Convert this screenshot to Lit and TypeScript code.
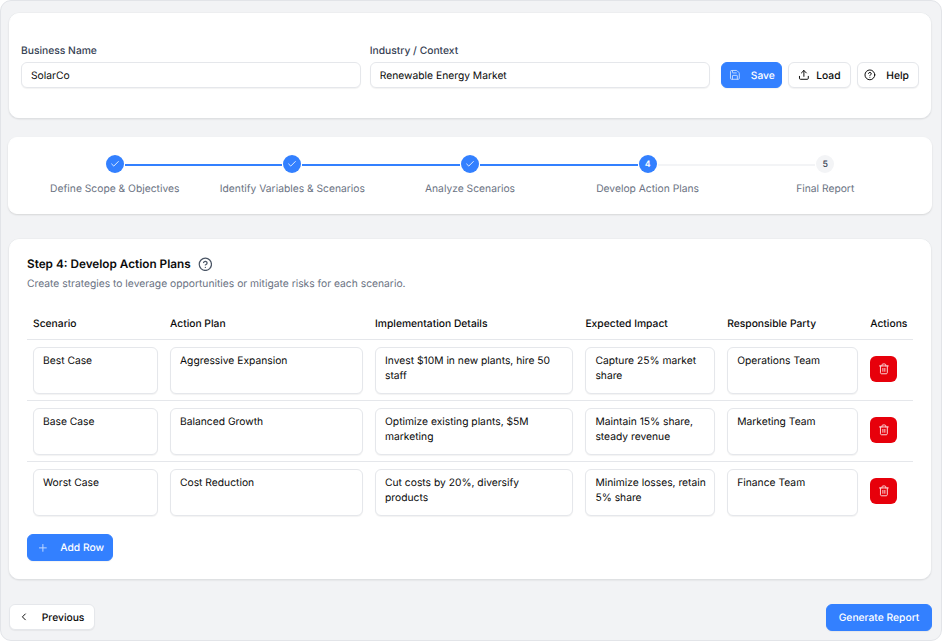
import { LitElement, html, css, svg } from "lit";
import { customElement } from "lit/decorators.js";

const icon = (body: unknown, cls = "") => html`<svg class="ic ${cls}" viewBox="0 0 24 24" fill="none" stroke="currentColor" stroke-width="2" stroke-linecap="round" stroke-linejoin="round">${body}</svg>`;
const icons = {
  save: svg`<path d="M15.2 3a2 2 0 0 1 1.4.6l3.8 3.8a2 2 0 0 1 .6 1.4V19a2 2 0 0 1-2 2H5a2 2 0 0 1-2-2V5a2 2 0 0 1 2-2z"/><path d="M17 21v-7a1 1 0 0 0-1-1H8a1 1 0 0 0-1 1v7"/><path d="M7 3v4a1 1 0 0 0 1 1h7"/>`,
  upload: svg`<path d="M21 15v4a2 2 0 0 1-2 2H5a2 2 0 0 1-2-2v-4"/><polyline points="17 8 12 3 7 8"/><line x1="12" x2="12" y1="3" y2="15"/>`,
  help: svg`<circle cx="12" cy="12" r="10"/><path d="M9.09 9a3 3 0 0 1 5.83 1c0 2-3 3-3 3"/><path d="M12 17h.01"/>`,
  trash: svg`<path d="M3 6h18"/><path d="M19 6v14c0 1-1 2-2 2H7c-1 0-2-1-2-2V6"/><path d="M8 6V4c0-1 1-2 2-2h4c1 0 2 1 2 2v2"/><line x1="10" x2="10" y1="11" y2="17"/><line x1="14" x2="14" y1="11" y2="17"/>`,
  plus: svg`<path d="M5 12h14"/><path d="M12 5v14"/>`,
  left: svg`<path d="m15 18-6-6 6-6"/>`,
  check: svg`<path d="M20 6 9 17l-5-5"/>`,
};

const steps = ["Define Scope & Objectives", "Identify Variables & Scenarios", "Analyze Scenarios", "Develop Action Plans", "Final Report"];
const cols = ["Scenario", "Action Plan", "Implementation Details", "Expected Impact", "Responsible Party", "Actions"];
const rows = [
  ["Best Case", "Aggressive Expansion", "Invest $10M in new plants, hire 50 staff", "Capture 25% market share", "Operations Team"],
  ["Base Case", "Balanced Growth", "Optimize existing plants, $5M marketing", "Maintain 15% share, steady revenue", "Marketing Team"],
  ["Worst Case", "Cost Reduction", "Cut costs by 20%, diversify products", "Minimize losses, retain 5% share", "Finance Team"],
];
const CURRENT = 3;

@customElement("app-root")
export class AppRoot extends LitElement {
  static styles = css`
    :host { display: block; font-family: Inter, "Liberation Sans", sans-serif; font-size: 10.29px; color: #0a0a0a; background: #fff; text-rendering: geometricPrecision; }
    * { box-sizing: border-box; }
    .frame { width: 942px; height: 641px; background: #f2f3f5; border: 1px solid #e2e4e8; border-radius: 11px; padding: 12px 10px 0 8px; display: flex; flex-direction: column; overflow: hidden; }
    .card { background: #fff; border-radius: 10px; border: 1px solid #fff; box-shadow: 0 0 0 .5px #e9ebee, 0 1px 2px rgba(0,0,0,.16); }
    .top { height: 105px; padding: 0 11px 29px; display: flex; align-items: flex-end; gap: 9px; flex: none; }
    .field { flex: 1; display: flex; flex-direction: column; gap: 4px; min-width: 0; }
    .top .field + .field { margin-right: 2px; }
    label { font-weight: 500; color: #364153; line-height: 14px; }
    input, textarea { font: inherit; color: #0a0a0a; border: 1px solid #e5e7eb; border-radius: 6px; background: #fff; box-shadow: 0 1px 1px rgba(0,0,0,.05); outline: none; text-rendering: geometricPrecision; }
    input { height: 26.46px; padding: 2px 9px 0; width: 100%; }
    .btns { display: flex; gap: 6px; }
    button { font: inherit; font-weight: 500; border-radius: 6px; height: 26.46px; display: inline-flex; align-items: center; border: 1px solid #e5e7eb; background: #fff; color: #0a0a0a; padding: 0; box-shadow: 0 1px 1px rgba(0,0,0,.05); white-space: nowrap; flex: none; text-rendering: geometricPrecision; }
    button.primary { background: #3380ff; border-color: #3380ff; color: #fff; }
    .label { padding-top: 2px; }
    .ic { width: 11.76px; height: 11.76px; flex: none; display: block; }
    .dim { opacity: .7; }
    .stepper { margin: 19px -1px 0; height: 77px; padding: 17px 17px 0; display: grid; grid-template-columns: repeat(5, 1fr); border-radius: 9px; box-shadow: 0 1px 2px rgba(0,0,0,.12); flex: none; }
    .step { display: flex; flex-direction: column; align-items: center; gap: 9px; color: #6a7282; min-width: 0; white-space: nowrap; }
    .track { display: flex; align-items: center; width: 100%; gap: 1px; }
    .seg { flex: 1; height: 2px; margin-top: 1px; background: #f3f4f6; }
    .seg.on { background: #3380ff; }
    .seg.none { background: transparent; }
    .dot { width: 18px; height: 18px; border-radius: 50%; display: flex; align-items: center; justify-content: center; background: #f3f4f6; color: #364153; font-size: 8.82px; font-weight: 500; flex: none; }
    .dot.on { background: #3380ff; color: #fff; font-weight: 600; }
    .dot .ic { width: 10px; height: 10px; }
    .steplabel { line-height: 14px; }
    .main { margin-top: 25px; height: 340px; padding: 16px 17px 0; flex: none; }
    h2 { margin: 0; font-size: 11.76px; font-weight: 600; line-height: 16px; display: flex; align-items: center; gap: 7px; }
    h2 .ic { width: 14.7px; height: 14.7px; color: #4a5565; }
    .sub { margin: 5px 0 0; color: #6a7282; line-height: 14px; }
    .grid { margin-top: 17px; display: grid; grid-template-columns: 137px 205px 210.4px 141.8px 143px 1fr; }
    .th { font-weight: 500; height: 32px; padding: 0 6px; display: flex; align-items: center; border-bottom: 1px solid #e5e7eb; white-space: nowrap; }
    .td { height: 61px; padding: 7px 6px 6px; border-bottom: 1px solid #e5e7eb; display: flex; align-items: flex-start; }
    .td.last { border-bottom: none; }
    textarea { width: 100%; height: 47px; resize: none; padding: 6px 7px 4px 9px; line-height: 15px; overflow: hidden; display: block; }
    textarea.roomy { padding-right: 10px; }
    .del { width: 26.46px; height: 26.46px; background: #e7000b; border: none; color: #fff; justify-content: center; margin-top: 9px; box-shadow: none; }
    .del .ic { opacity: .85; }
    .add { margin-top: 11px; width: 86px; height: 27px; padding-left: 8.5px; }
    .add .label { margin-left: 12px; padding-top: 1px; }
    .save { width: 61px; padding-left: 7.5px; }
    .save .label { margin-left: 10px; }
    .load { width: 63px; padding-left: 9px; }
    .load .label { margin-left: 7px; }
    .help { width: 62.5px; padding-left: 6.5px; }
    .help .label { margin-left: 10.5px; }
    .foot { margin: 25px -1px 0 0; display: flex; justify-content: space-between; }
    .prev { width: 85.5px; padding-left: 8px; }
    .prev .label { margin-left: 12px; }
    .gen { width: 106px; height: 27px; justify-content: center; }
    .gen .label { padding-top: 0; }
  `;

  render() {
    return html`<div class="frame">
      <section class="card top">
        <div class="field"><label>Business Name</label><input .value=${"SolarCo"} /></div>
        <div class="field"><label>Industry / Context</label><input .value=${"Renewable Energy Market"} /></div>
        <div class="btns">
          <button class="primary save">${icon(icons.save, "dim")}<span class="label">Save</span></button>
          <button class="load">${icon(icons.upload)}<span class="label">Load</span></button>
          <button class="help">${icon(icons.help)}<span class="label">Help</span></button>
        </div>
      </section>
      <section class="card stepper">
        ${steps.map((s, i) => html`<div class="step">
          <div class="track">
            <span class="seg ${i === 0 ? "none" : i <= CURRENT ? "on" : ""}"></span>
            <span class="dot ${i <= CURRENT ? "on" : ""}">${i < CURRENT ? icon(icons.check) : i + 1}</span>
            <span class="seg ${i === 4 ? "none" : i < CURRENT ? "on" : ""}"></span>
          </div>
          <span class="steplabel">${s}</span>
        </div>`)}
      </section>
      <section class="card main">
        <h2>Step 4: Develop Action Plans ${icon(icons.help)}</h2>
        <p class="sub">Create strategies to leverage opportunities or mitigate risks for each scenario.</p>
        <div class="grid">
          ${cols.map((c) => html`<div class="th">${c}</div>`)}
          ${rows.map((r, ri) => html`
            ${r.map((v, ci) => html`<div class="td ${ri === 2 ? "last" : ""}"><textarea class=${ci === 2 ? "roomy" : ""} .value=${v}></textarea></div>`)}
            <div class="td ${ri === 2 ? "last" : ""}"><button class="del" aria-label="Delete">${icon(icons.trash)}</button></div>
          `)}
        </div>
        <button class="primary add">${icon(icons.plus, "dim")}<span class="label">Add Row</span></button>
      </section>
      <div class="foot">
        <button class="prev">${icon(icons.left)}<span class="label">Previous</span></button>
        <button class="primary gen"><span class="label">Generate Report</span></button>
      </div>
    </div>`;
  }
}
